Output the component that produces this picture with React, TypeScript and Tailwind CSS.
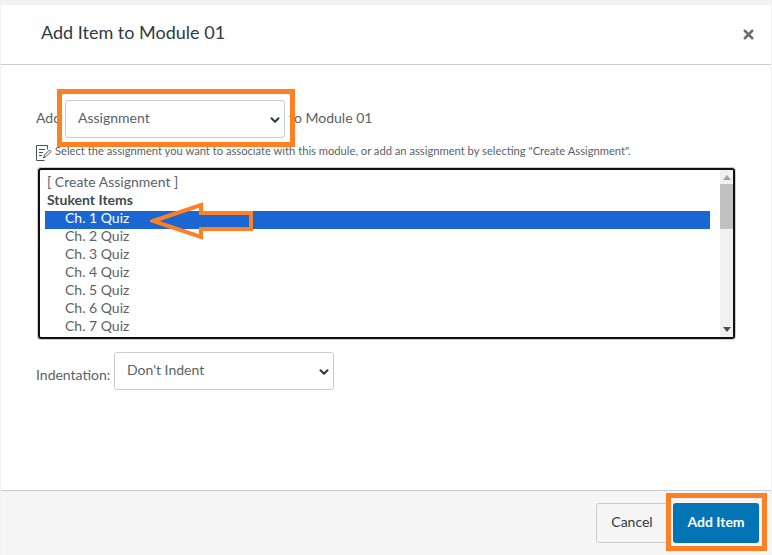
import React from "react";
import { ChevronDown, X } from "lucide-react";

const quizzes = ["Ch. 1 Quiz", "Ch. 2 Quiz", "Ch. 3 Quiz", "Ch. 4 Quiz", "Ch. 5 Quiz", "Ch. 6 Quiz", "Ch. 7 Quiz"];

function FakeSelect({ label, textClass }: { label: string; textClass: string }) {
  return (
    <div className="h-[38px] w-[220px] shrink-0 flex justify-between border border-[#c7cdd1] rounded-[3px] bg-white pl-[12px] pr-[2px]">
      <span className={`text-[#5a6268] text-[14px] ${textClass}`}>{label}</span>
      <ChevronDown size={14} strokeWidth={3.5} className="text-[#2d3b45] self-center mt-[2px]" />
    </div>
  );
}

function NoteIcon() {
  return (
    <svg width="16" height="16" viewBox="0 0 16 16" fill="none" stroke="#4a5258" strokeWidth="1" className="shrink-0">
      <path d="M11.5 4.5V.5H.5v15h8" />
      <path d="M3 4.5h6M3 7.5h4M3 10.5h3" />
      <path d="M7.5 13l1-3 5-5 1.5 1.5-5 5z" />
    </svg>
  );
}

export default function App() {
  return (
    <div className="relative h-[555px] w-[772px] overflow-hidden bg-[#f2f2f2] pt-[5px] pl-px pr-px font-['Lato','Noto_Sans',sans-serif]">
      <div className="h-[550px] bg-white flex flex-col">
        {/* Header */}
        <header className="h-[60px] shrink-0 border-b border-[#c7cdd1] flex items-center justify-between pl-[40px] pr-[15px]">
          <h1 className="text-[18px] text-[#2d3b45] pb-[4px]">Add Item to Module 01</h1>
          <X size={15} strokeWidth={4} className="text-[#666f75]" />
        </header>

        {/* Body */}
        <main className="flex-1 pl-[35px] pr-[35px] pt-[35px]">
          <div className="flex items-center h-[38px] text-[14px] text-[#5a6268]">
            <span className="w-[29px] pb-[3px]">Add</span>
            <FakeSelect label="Assignment" textClass="leading-[34px]" />
            <span className="ml-[4px] pb-[3px]">to Module 01</span>
          </div>

          <div className="flex items-start h-[22px] mt-[7px] text-[11.2px] text-[#5a6268]">
            <NoteIcon />
            <span className="leading-[11px] ml-[3px]">
              Select the assignment you want to associate with this module, or add an assignment by selecting "Create Assignment".
            </span>
          </div>

          {/* Listbox */}
          <div className="h-[173px] w-[699px] ml-px border border-[#c7cdd1] rounded-[3px]">
            <div className="relative h-full border-2 border-[#111111] rounded-[3px] pt-[3px] pl-[5px] text-[14px] leading-[18px] text-[#5a6268]">
              <div className="pl-[2px]">[ Create Assignment ]</div>
              <div className="pl-[2px] font-bold text-[#3f4a52]">Stukent Items</div>
              <div className="mt-[2px]">
                {quizzes.map((q, i) => (
                  <div
                    key={q}
                    className={`h-[18px] w-[665px] pl-[20px] leading-[14px] ${i === 0 ? "bg-[#1a66d2] text-white" : ""}`}
                  >
                    {q}
                  </div>
                ))}
              </div>
              {/* scrollbar */}
              <div className="absolute right-0 top-0 bottom-0 w-[13px] bg-[#f1f1f1] flex flex-col items-center">
                <div className="h-0 w-0 mt-[5px] border-x-[4px] border-b-[5px] border-x-transparent border-b-[#a3a3a3]" />
                <div className="w-[13px] h-[45px] mt-[4px] bg-[#c1c1c1]" />
                <div className="h-0 w-0 mt-auto mb-[5px] border-x-[4px] border-t-[5px] border-x-transparent border-t-[#505050]" />
              </div>
            </div>
          </div>

          <div className="flex items-center mt-[12px] h-[38px] text-[14px] text-[#5a6268]">
            <span className="w-[78px] mt-[6px] shrink-0">Indentation:</span>
            <FakeSelect label="Don't Indent" textClass="leading-[34px]" />
          </div>
        </main>

        {/* Footer */}
        <footer className="h-[65px] shrink-0 border-t border-[#c7cdd1] bg-[#f5f5f5] flex items-start justify-end gap-[5px] pt-[12px] pr-[12px]">
          <button className="h-[40px] w-[72px] pb-[3px] border border-[#c7cdd1] rounded-[3px] bg-[#f5f5f5] text-[14px] text-[#2d3b45]">Cancel</button>
          <button className="h-[40px] w-[86px] pb-[3px] rounded-[3px] bg-[#0374b5] text-[14px] font-bold text-white">Add Item</button>
        </footer>
      </div>

      {/* Annotations drawn over the screenshot */}
      <div className="absolute left-[57px] top-[89px] w-[238px] h-[58px] border-[5px] border-[#fd8024]" />
      <div className="absolute left-[666px] top-[493px] w-[101px] h-[58px] border-[5px] border-[#fd8024]" />
      <svg className="absolute left-[150px] top-[200px]" width="106" height="42" viewBox="0 0 106 42" fill="none">
        <path d="M3 21 L51 5 V13 H101 V29 H51 V37 Z" stroke="#fd8024" strokeWidth="4" />
      </svg>
    </div>
  );
}
